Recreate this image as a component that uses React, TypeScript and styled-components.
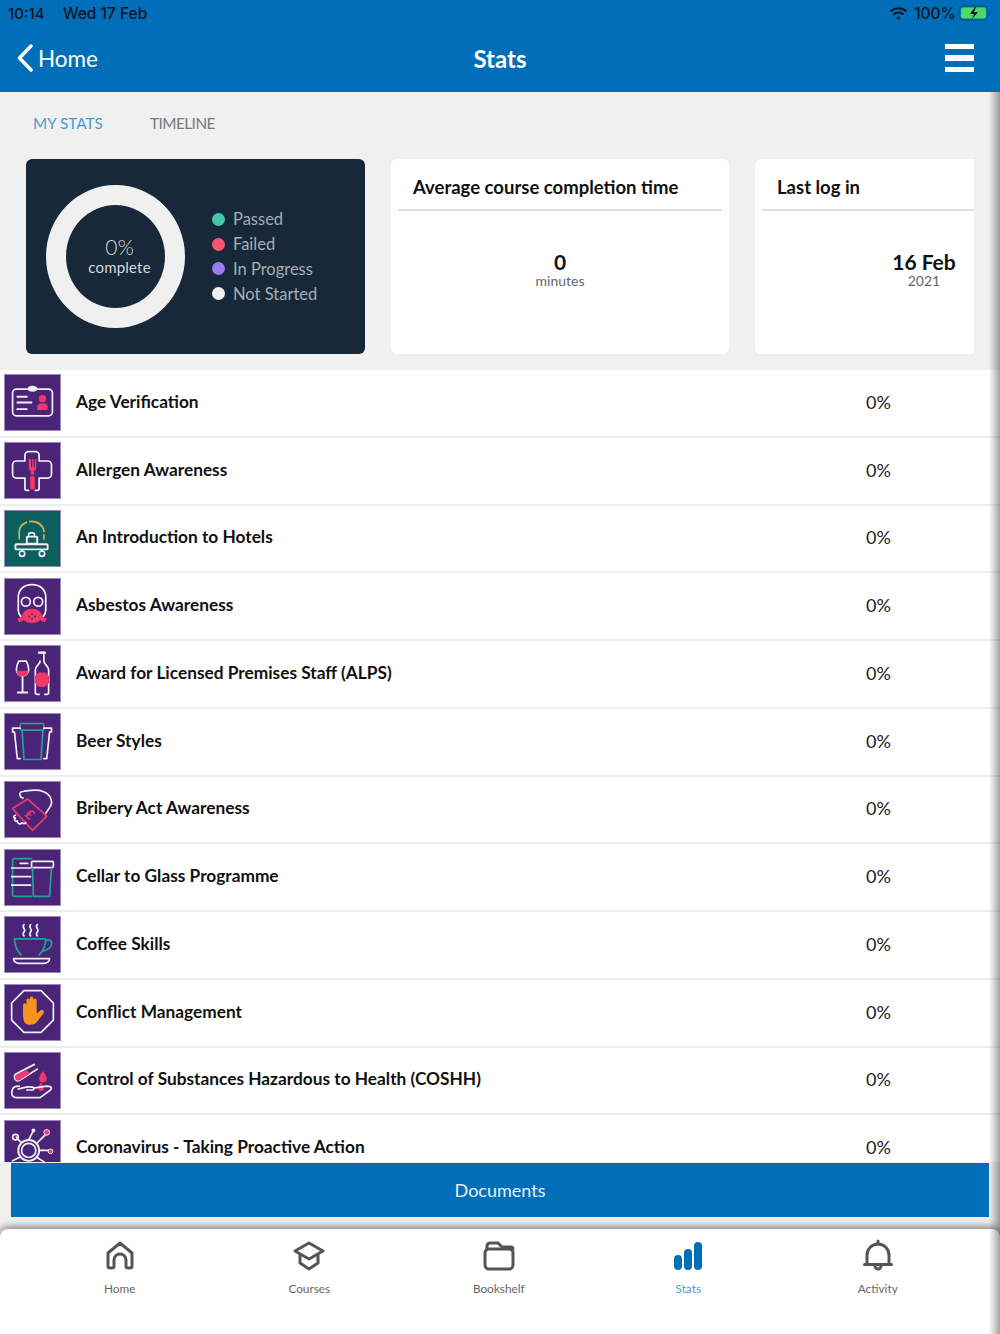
import React from 'react';
import styled, { createGlobalStyle } from 'styled-components';

const GlobalStyle = createGlobalStyle`
  html, body {
    margin: 0;
    padding: 0;
    background: #f0f0f0;
  }
  * {
    box-sizing: border-box;
  }
`;

const WHITE = '#f1eef6';
const PINK = '#f0386b';
const TEAL = '#1fa595';
const YELLOW = '#c9b458';

const Page = styled.div`
  position: relative;
  width: 1000px;
  height: 1334px;
  overflow: hidden;
  display: flex;
  flex-direction: column;
  font-family: 'Lato', 'Liberation Sans', sans-serif;
  background: #f0f0f0;
`;

const Header = styled.header`
  height: 92px;
  flex: none;
  background: #006eb8;
  display: flex;
  flex-direction: column;
`;

const StatusBar = styled.div`
  height: 26px;
  padding: 0 9px 0 8px;
  display: flex;
  align-items: center;
  font-family: 'Inter', 'Liberation Sans', sans-serif;
  font-size: 15.5px;
  font-weight: 500;
  color: #0a1622;
`;

const StatusTime = styled.span`
  width: 55px;
  font-size: 15px;
`;

const StatusRight = styled.div`
  margin-left: auto;
  display: flex;
  align-items: center;
  gap: 6px;
`;

const BatteryIcon = styled.svg`
  margin-left: -3px;
`;

const NavBar = styled.div`
  flex: 1;
  padding: 0 26px 2px 26px;
  display: grid;
  grid-template-columns: 1fr auto 1fr;
  align-items: center;
  color: #fff;
`;

const BackLink = styled.div`
  margin-left: -9px;
  display: flex;
  align-items: center;
  gap: 5px;
  font-size: 22.5px;
`;

const NavTitle = styled.h1`
  margin: 0;
  font-size: 24px;
  font-weight: 700;
`;

const MenuButton = styled.div`
  justify-self: end;
  width: 29px;
  display: flex;
  flex-direction: column;
  gap: 6px;
`;

const MenuBar = styled.span`
  display: block;
  height: 5.5px;
  background: #fff;
`;

const Main = styled.main`
  flex: 1;
  min-height: 0;
  display: flex;
  flex-direction: column;
`;

const TabRow = styled.nav`
  height: 67px;
  flex: none;
  padding: 0 0 6px 33px;
  display: flex;
  align-items: center;
  gap: 47px;
  font-size: 15.3px;
`;

const TabLink = styled.span<{ $active?: boolean }>`
  color: ${(p) => (p.$active ? '#4a9bd4' : '#777')};
  letter-spacing: ${(p) => (p.$active ? '0' : '-0.5px')};
`;

const CardRow = styled.section`
  flex: none;
  width: 974px;
  height: 211px;
  padding: 0 0 16px 26px;
  display: flex;
  gap: 26px;
  overflow: hidden;
`;

const ChartCard = styled.div`
  flex: none;
  width: 339px;
  border-radius: 6px;
  background: #172838;
  display: flex;
  align-items: center;
  padding-left: 20px;
  gap: 27px;
`;

const Donut = styled.div`
  width: 139px;
  height: 143px;
  flex: none;
  border-radius: 50%;
  border: 20px solid #f0f0f0;
  padding: 0 0 2px 8px;
  display: flex;
  flex-direction: column;
  align-items: center;
  justify-content: center;
  color: #d5d9dc;
`;

const DonutValue = styled.span`
  font-size: 21px;
  line-height: 24px;
  font-weight: 300;
`;

const DonutLabel = styled.span`
  font-size: 15px;
  line-height: 17px;
  letter-spacing: 0.2px;
`;

const Legend = styled.ul`
  list-style: none;
  margin: 0;
  padding: 0;
  display: flex;
  flex-direction: column;
`;

const LegendItem = styled.li`
  height: 24.7px;
  display: flex;
  align-items: center;
  gap: 8px;
  font-size: 16.5px;
  color: #a5aeb5;
`;

const LegendDot = styled.span<{ $color: string }>`
  width: 13px;
  height: 13px;
  border-radius: 50%;
  background: ${(p) => p.$color};
`;

const InfoCard = styled.div`
  flex: none;
  width: 338px;
  border-radius: 6px;
  background: #fff;
  padding: 0 7px;
  display: flex;
  flex-direction: column;
`;

const InfoTitle = styled.h2`
  margin: 0;
  height: 52px;
  padding: 5px 15px 0;
  display: flex;
  align-items: center;
  border-bottom: 2px solid #ddd;
  font-size: 18.5px;
  font-weight: 700;
  color: #111;
`;

const InfoBody = styled.div`
  padding-top: 39px;
  display: flex;
  flex-direction: column;
  align-items: center;
`;

const InfoValue = styled.strong`
  font-size: 21px;
  line-height: 24px;
  color: #111;
`;

const InfoUnit = styled.span`
  font-size: 14px;
  line-height: 13px;
  color: #666;
`;

const CourseList = styled.ul`
  flex: 1;
  min-height: 0;
  margin: 0;
  padding: 0;
  list-style: none;
  overflow: hidden;
  background: #fff;
`;

const CourseRow = styled.li`
  height: 67.75px;
  padding-left: 4px;
  border-bottom: 2px solid #eee;
  display: grid;
  grid-template-columns: 72px 1fr 134px;
  align-items: center;
  background: #fff;
`;

const CourseIcon = styled.svg<{ $bg: string }>`
  display: block;
  width: 57px;
  height: 57px;
  background: ${(p) => p.$bg};
  border: 1px solid #9d88bb;
`;

const CourseName = styled.span`
  font-size: 17.3px;
  font-weight: 700;
  color: #111;
  padding-bottom: 3px;
`;

const CoursePercent = styled.span`
  font-size: 18px;
  color: #222;
  padding-bottom: 2px;
`;

const DocumentsButton = styled.button`
  flex: none;
  height: 54px;
  margin: 1px 11px 12px;
  border: 0;
  background: #006eb8;
  color: #e6f1f8;
  font-family: inherit;
  font-size: 18px;
`;

const TabBar = styled.footer`
  position: relative;
  flex: none;
  height: 105px;
  padding: 9px 27.5px 0 25px;
  display: grid;
  grid-template-columns: repeat(5, 1fr);
  align-items: start;
  background: #fff;
  border-radius: 8px 8px 0 0;
  box-shadow: 0 -1px 10px rgba(0, 0, 0, 0.6);
`;

const TabItem = styled.div<{ $active?: boolean }>`
  display: flex;
  flex-direction: column;
  align-items: center;
  gap: 7px;
  font-size: 11.8px;
  color: ${(p) => (p.$active ? '#4a9bd4' : '#666')};
`;

const TabIcon = styled.svg`
  display: block;
  width: 36px;
  height: 36px;
  fill: none;
  stroke: #555;
  stroke-width: 3;
  stroke-linecap: round;
  stroke-linejoin: round;
`;

const EdgeShadow = styled.div`
  position: absolute;
  top: 92px;
  right: 0;
  bottom: 0;
  width: 11px;
  pointer-events: none;
  background: linear-gradient(to right, rgba(0, 0, 0, 0), rgba(0, 0, 0, 0.36));
`;

const line = { fill: 'none', stroke: WHITE, strokeWidth: 1.8, strokeLinecap: 'round', strokeLinejoin: 'round' } as const;
const teal = { ...line, stroke: TEAL };
const pinkLine = { ...line, stroke: PINK };

const icons: Record<string, React.ReactNode> = {
  id: (
    <>
      <rect x="8" y="15" width="42" height="28" rx="4" {...line} />
      <ellipse cx="29" cy="14.5" rx="5" ry="3.2" fill={WHITE} />
      <path d="M13 23h10M13 29h15M13 36h10" {...line} strokeWidth={2} />
      <circle cx="39.5" cy="25" r="3.8" fill={PINK} />
      <path d="M34 37v-3a4 4 0 0 1 4-4h3a4 4 0 0 1 4 4v3z" fill={PINK} />
    </>
  ),
  allergen: (
    <>
      <path
        d="M25 50h-2a2 2 0 0 1-2-2V37h-9a4 4 0 0 1-4-4V23a4 4 0 0 1 4-4h9v-6a4 4 0 0 1 4-4h7a4 4 0 0 1 4 4v6h9a4 4 0 0 1 4 4v10a4 4 0 0 1-4 4h-9v11a2 2 0 0 1-2 2h-2"
        {...line}
      />
      <path d="M25 17v9a4 4 0 0 0 2.5 3.5l-.5 4 h4l-.5-4a4 4 0 0 0 2.5-3.5v-9h-1.5v8h-1.2v-8h-1.6v8h-1.2v-8z" fill={PINK} />
      <rect x="26.5" y="35" width="5" height="14" rx="1.5" fill={PINK} />
    </>
  ),
  hotel: (
    <>
      <path d="M15 30V22a13 11 0 0 1 26 0v8" fill="none" stroke={YELLOW} strokeWidth={1.8} strokeDasharray="22 2" />
      <path d="M25 27v-2.5a1.5 1.5 0 0 1 1.5-1.5h3a1.5 1.5 0 0 1 1.5 1.5V27" {...line} />
      <rect x="23" y="27" width="11" height="7.5" rx="1" {...line} strokeWidth={2} />
      <rect x="11" y="35" width="34" height="5.5" rx="1" {...line} strokeWidth={2} />
      <path d="M18 41v1M39 41v1" {...line} />
      <circle cx="18" cy="45" r="2.8" {...line} />
      <circle cx="39" cy="45" r="2.8" {...line} />
    </>
  ),
  mask: (
    <>
      <path d="M14 33V19C14 11 20 6 28.500 6S43 11 43 19v14c0 3-1 5-3 7M14 33c0 3 1 5 3 7" {...line} />
      <circle cx="22" cy="24" r="4.700" {...line} />
      <circle cx="35" cy="24" r="4.700" {...line} />
      <ellipse cx="28.500" cy="39" rx="10.500" ry="7.500" fill={PINK} />
      <path d="M18 39l-5 3 2 4 6-3zM39 39l5 3-2 4-6-3z" fill={PINK} />
      <circle cx="28.500" cy="37" r="1" fill="#4a2477" />
      <circle cx="25.500" cy="39.500" r="1" fill="#4a2477" />
      <circle cx="31.500" cy="39.500" r="1" fill="#4a2477" />
      <circle cx="28.500" cy="42" r="1" fill="#4a2477" />
    </>
  ),
  wine: (
    <>
      <path d="M12 25c0-4 1.500-7 2.500-9h8c1 2 2.500 5 2.500 9a6.500 6.500 0 0 1-13 0z" {...line} />
      <path d="M12 26h13a6.500 6.500 0 0 1-13 0z" fill={PINK} />
      <path d="M18.500 33v15M13.500 49h10" {...line} strokeWidth={2} />
      <path d="M37 7h4v9c0 3 5 5 5 9v24a2 2 0 0 1-2 2h-2M37 16c0 3-5 5-5 9v24a2 2 0 0 0 2 2h2" {...line} />
      <path d="M36 7h6" {...line} strokeWidth={2.600} />
      <path d="M35.500 28h7l4 4v7l-4 4h-7l-4-4v-7z" fill={PINK} />
    </>
  ),
  beer: (
    <>
      <rect x="16" y="10" width="25" height="7" rx="1.500" {...teal} />
      <path d="M18 17l2 31h18l2-31" {...teal} />
      <path d="M16 15H8v4h2l3 28h3M41 15h8v4h-2l-3 28h-3" {...line} />
    </>
  ),
  bribery: (
    <>
      <path d="M19 17c-4-1-5-7 0-7 7-1 14-3 21 0 7 2 12 10 7 17l-4 6" {...line} />
      <path d="M8 28l16-10 20 18-15 15z" {...pinkLine} />
      <text x="26" y="39" fill={PINK} fontSize="14" fontWeight="700" fontFamily="Lato, sans-serif" textAnchor="middle" transform="rotate(40 26 34)">£</text>
      <path d="M11 35c-3 1-2 3 0 3-2 2 0 4 2 3 0 3 3 4 5 2 1 1 3 1 4 0" {...line} />
    </>
  ),
  cellar: (
    <>
      <path d="M28 9H10a2 2 0 0 0-2 2v36a2 2 0 0 0 2 2h18" {...teal} />
      <path d="M16 14h8M7 19h20M7 28h20M7 37h20" {...line} />
      <rect x="28" y="12" width="23" height="6.500" rx="1" {...line} />
      <path d="M29 19l1 30h17l2-30" {...teal} />
    </>
  ),
  coffee: (
    <>
      <path d="M20 8c-3 3 3 5 0 8-1 1-1 3 0 4M27 8c-3 3 3 5 0 8-1 1-1 3 0 4M34 8c-3 3 3 5 0 8-1 1-1 3 0 4" {...line} />
      <path d="M10 23h33c0 6-2 12-7 17M10 23c0 6 2 12 7 17" {...teal} />
      <path d="M43 25c4-2 7 0 6 4-1 4-5 6-9 7" {...teal} />
      <path d="M9 44h38c0 3-3 5-6 5H15c-3 0-6-2-6-5z" {...line} />
    </>
  ),
  conflict: (
    <>
      <path d="M20 6h18l13 13v18L38 50H20L7 37V19z" {...line} />
      <path
        d="M19 34V21a1.800 1.800 0 0 1 3.600 0v-5a1.800 1.800 0 0 1 3.600 0v-2a1.800 1.800 0 0 1 3.600 0v2a1.800 1.800 0 0 1 3.600 0v14l4-3c2-1.500 5 .5 3 3l-6 8c-2 3-4 4-8 4-5 0-7-3-7-8z"
        fill="#f7941d"
      />
    </>
  ),
  coshh: (
    <>
      <path d="M31 12L12 22c-4 2-1 9 3 7l19-12" {...line} />
      <path d="M12 23l11-5 3 4-11 7c-4 1-6-4-3-6z" fill={PINK} />
      <path d="M40 19c3 4 4 6 4 8a4 4 0 0 1-8 0c0-2 1-4 4-8z" fill={PINK} />
      <path d="M38 31c2 3 3 4 3 6a3 3 0 0 1-6 0c0-2 1-3 3-6z" fill={PINK} />
      <path d="M14 38c5-1 9-3 15-2 2 .500 2 3 0 3h-6M30 37l14-2c5 0 6 2 4 4l-11 8H12c-5 0-6-5-4-9 1-2 3-3 7-3" {...line} />
    </>
  ),
  virus: (
    <>
      <circle cx="25" cy="31" r="11" {...line} strokeWidth={2} />
      <circle cx="25" cy="31" r="7.500" {...line} />
      <path d="M17 23l-5-6M25 20l4-8M33 24l10-10M36 31h11M16 38l-8 4M33 38l8 5" {...line} />
      <circle cx="11" cy="17" r="3" {...line} />
      <circle cx="30" cy="10" r="2" fill={WHITE} />
      <circle cx="44" cy="12" r="3" fill={PINK} stroke={WHITE} />
      <circle cx="48" cy="32" r="2.500" fill={PINK} stroke={WHITE} />
    </>
  ),
};

const PURPLE = '#4a2477';
const courses = [
  { name: 'Age Verification', icon: 'id', bg: PURPLE },
  { name: 'Allergen Awareness', icon: 'allergen', bg: PURPLE },
  { name: 'An Introduction to Hotels', icon: 'hotel', bg: '#0d5f5e' },
  { name: 'Asbestos Awareness', icon: 'mask', bg: PURPLE },
  { name: 'Award for Licensed Premises Staff (ALPS)', icon: 'wine', bg: PURPLE },
  { name: 'Beer Styles', icon: 'beer', bg: PURPLE },
  { name: 'Bribery Act Awareness', icon: 'bribery', bg: PURPLE },
  { name: 'Cellar to Glass Programme', icon: 'cellar', bg: PURPLE },
  { name: 'Coffee Skills', icon: 'coffee', bg: PURPLE },
  { name: 'Conflict Management', icon: 'conflict', bg: PURPLE },
  { name: 'Control of Substances Hazardous to Health (COSHH)', icon: 'coshh', bg: PURPLE },
  { name: 'Coronavirus - Taking Proactive Action', icon: 'virus', bg: PURPLE },
];

const legend = [
  { label: 'Passed', color: '#45c6a8' },
  { label: 'Failed', color: '#f5566e' },
  { label: 'In Progress', color: '#9b7cf0' },
  { label: 'Not Started', color: '#f0f0f0' },
];

const tabs: { label: string; active?: boolean; icon: React.ReactNode }[] = [
  {
    label: 'Home',
    icon: <path d="M6 28V15L18 5l12 10v13a2 2 0 0 1-2 2h-2a2 2 0 0 1-2-2v-6a6 6 0 0 0-12 0v6a2 2 0 0 1-2 2H8a2 2 0 0 1-2-2z" />,
  },
  {
    label: 'Courses',
    icon: (
      <>
        <path d="M18 5l14 8-14 8-14-8z" />
        <path d="M9 17v8l9 6 9-6v-8" />
      </>
    ),
  },
  {
    label: 'Bookshelf',
    icon: (
      <>
        <rect x="4" y="11" width="28" height="20" rx="4" />
        <path d="M6 11V8a3 3 0 0 1 3-3h8l4 4h9a2 2 0 0 1 2 2" />
      </>
    ),
  },
  {
    label: 'Stats',
    active: true,
    icon: (
      <g fill="#006eb8" stroke="none">
        <rect x="4" y="17" width="8" height="15" rx="4" />
        <rect x="14" y="11" width="8" height="21" rx="4" />
        <rect x="24" y="4" width="8" height="28" rx="4" />
      </g>
    ),
  },
  {
    label: 'Activity',
    icon: (
      <>
        <path d="M7 26V17a11 11 0 0 1 22 0v9" />
        <path d="M4.500 26.500h27M18 3v3M15 28a3 3 0 0 0 6 0" />
      </>
    ),
  },
];

const App: React.FC = () => {
  return (
    <Page>
      <GlobalStyle />
      <Header>
        <StatusBar>
          <StatusTime>10:14</StatusTime>
          <span>Wed 17 Feb</span>
          <StatusRight>
            <svg width="19" height="15" viewBox="0 0 19 15" fill="none" stroke="#0a1622" strokeWidth="2.200">
              <path d="M1.500 5.500a11.500 11.500 0 0 1 16 0M4.500 8.500a7.200 7.200 0 0 1 10 0" />
              <circle cx="9.500" cy="12" r="1.600" fill="#0a1622" stroke="none" />
            </svg>
            <span>100%</span>
            <BatteryIcon width="32" height="16" viewBox="0 0 32 16">
              <rect x=".5" y="1" width="28" height="14" rx="3.500" fill="none" stroke="#004f86" />
              <rect x="2" y="2.500" width="25" height="11" rx="2" fill="#4cd964" />
              <path d="M16 2l-5 7h4l-2 5 6-7h-4l2-5z" fill="#0a1622" />
              <rect x="30" y="6" width="1.500" height="4" rx=".7" fill="#004f86" />
            </BatteryIcon>
          </StatusRight>
        </StatusBar>
        <NavBar>
          <BackLink>
            <svg width="16" height="28" viewBox="0 0 16 28" fill="none" stroke="#fff" strokeWidth="3.500" strokeLinecap="round" strokeLinejoin="round">
              <path d="M14 2L2.500 14 14 26" />
            </svg>
            Home
          </BackLink>
          <NavTitle>Stats</NavTitle>
          <MenuButton>
            <MenuBar />
            <MenuBar />
            <MenuBar />
          </MenuButton>
        </NavBar>
      </Header>
      <Main>
        <TabRow>
          <TabLink $active>MY STATS</TabLink>
          <TabLink>TIMELINE</TabLink>
        </TabRow>
        <CardRow>
          <ChartCard>
            <Donut>
              <DonutValue>0%</DonutValue>
              <DonutLabel>complete</DonutLabel>
            </Donut>
            <Legend>
              {legend.map((item) => (
                <LegendItem key={item.label}>
                  <LegendDot $color={item.color} />
                  {item.label}
                </LegendItem>
              ))}
            </Legend>
          </ChartCard>
          <InfoCard>
            <InfoTitle>Average course completion time</InfoTitle>
            <InfoBody>
              <InfoValue>0</InfoValue>
              <InfoUnit>minutes</InfoUnit>
            </InfoBody>
          </InfoCard>
          <InfoCard>
            <InfoTitle>Last log in</InfoTitle>
            <InfoBody>
              <InfoValue>16 Feb</InfoValue>
              <InfoUnit>2021</InfoUnit>
            </InfoBody>
          </InfoCard>
        </CardRow>
        <CourseList>
          {courses.map((course) => (
            <CourseRow key={course.name}>
              <CourseIcon $bg={course.bg} viewBox="0 0 58 58">
                {icons[course.icon]}
              </CourseIcon>
              <CourseName>{course.name}</CourseName>
              <CoursePercent>0%</CoursePercent>
            </CourseRow>
          ))}
        </CourseList>
        <DocumentsButton>Documents</DocumentsButton>
      </Main>
      <TabBar>
        {tabs.map((tab) => (
          <TabItem key={tab.label} $active={tab.active}>
            <TabIcon viewBox="0 0 36 36">{tab.icon}</TabIcon>
            {tab.label}
          </TabItem>
        ))}
      </TabBar>
      <EdgeShadow />
    </Page>
  );
};

export default App;
